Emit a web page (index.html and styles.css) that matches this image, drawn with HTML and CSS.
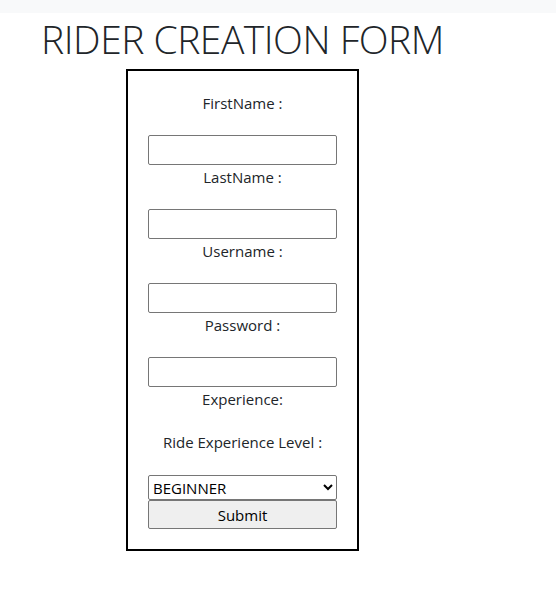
FILE: index.html
```html
<!DOCTYPE html>
<html>
<head>
<meta charset="utf-8">
<link rel="stylesheet" href="styles.css">
</head>
<body>
<div class="topbar"></div>
<div class="wrap">
  <h1 class="title">RIDER CREATION FORM</h1>
  <form class="card">
    <label class="lbl">FirstName :</label>
    <input class="field" type="text">
    <label class="lbl">LastName :</label>
    <input class="field" type="text">
    <label class="lbl">Username :</label>
    <input class="field" type="text">
    <label class="lbl">Password :</label>
    <input class="field" type="password">
    <label class="lbl">Experience:</label>
    <label class="lbl lbl-last">Ride Experience Level :</label>
    <select class="sel"><option>BEGINNER</option></select>
    <button class="btn" type="button">Submit</button>
  </form>
</div>
</body>
</html>
```
FILE: styles.css
```css
html, body { margin: 0; padding: 0; background: #fff; }
body { font-family: "Open Sans", "Noto Sans", sans-serif; color: #212529; }
.topbar { height: 13px; background: #f8f9fa; }
.wrap { width: 485px; display: flex; flex-direction: column; align-items: center; }
.title {
  margin: 0;
  font-weight: 300;
  font-size: 39px;
  line-height: 52px;
  letter-spacing: -0.5px;
  color: #212529;
}
.card {
  box-sizing: border-box;
  width: 233px;
  margin-top: 4px;
  border: 2px solid #000;
  padding: 21px 20px 20px 20px;
  display: flex;
  flex-direction: column;
  align-items: stretch;
  text-align: center;
}
.lbl { display: block; font-size: 15px; line-height: 23px; margin-bottom: 20px; }
.lbl-last { margin-bottom: 21px; }
.field {
  box-sizing: border-box;
  height: 30px; margin: 0 0 1px 0;
  border: 1px solid #767676; border-radius: 2px; background: #fff;
}
.sel {
  box-sizing: border-box; height: 25px; margin: 0;
  font-family: "Open Sans", sans-serif; font-size: 15px; color: #000;
  border: 1px solid #767676; border-radius: 2px; background: #fff;
  padding: 0;
}
.btn {
  box-sizing: border-box; height: 29px; margin: 0;
  font-family: "Open Sans", sans-serif; font-size: 15px; color: #000;
  border: 1px solid #767676; border-radius: 2px; background: #efefef;
}
```
